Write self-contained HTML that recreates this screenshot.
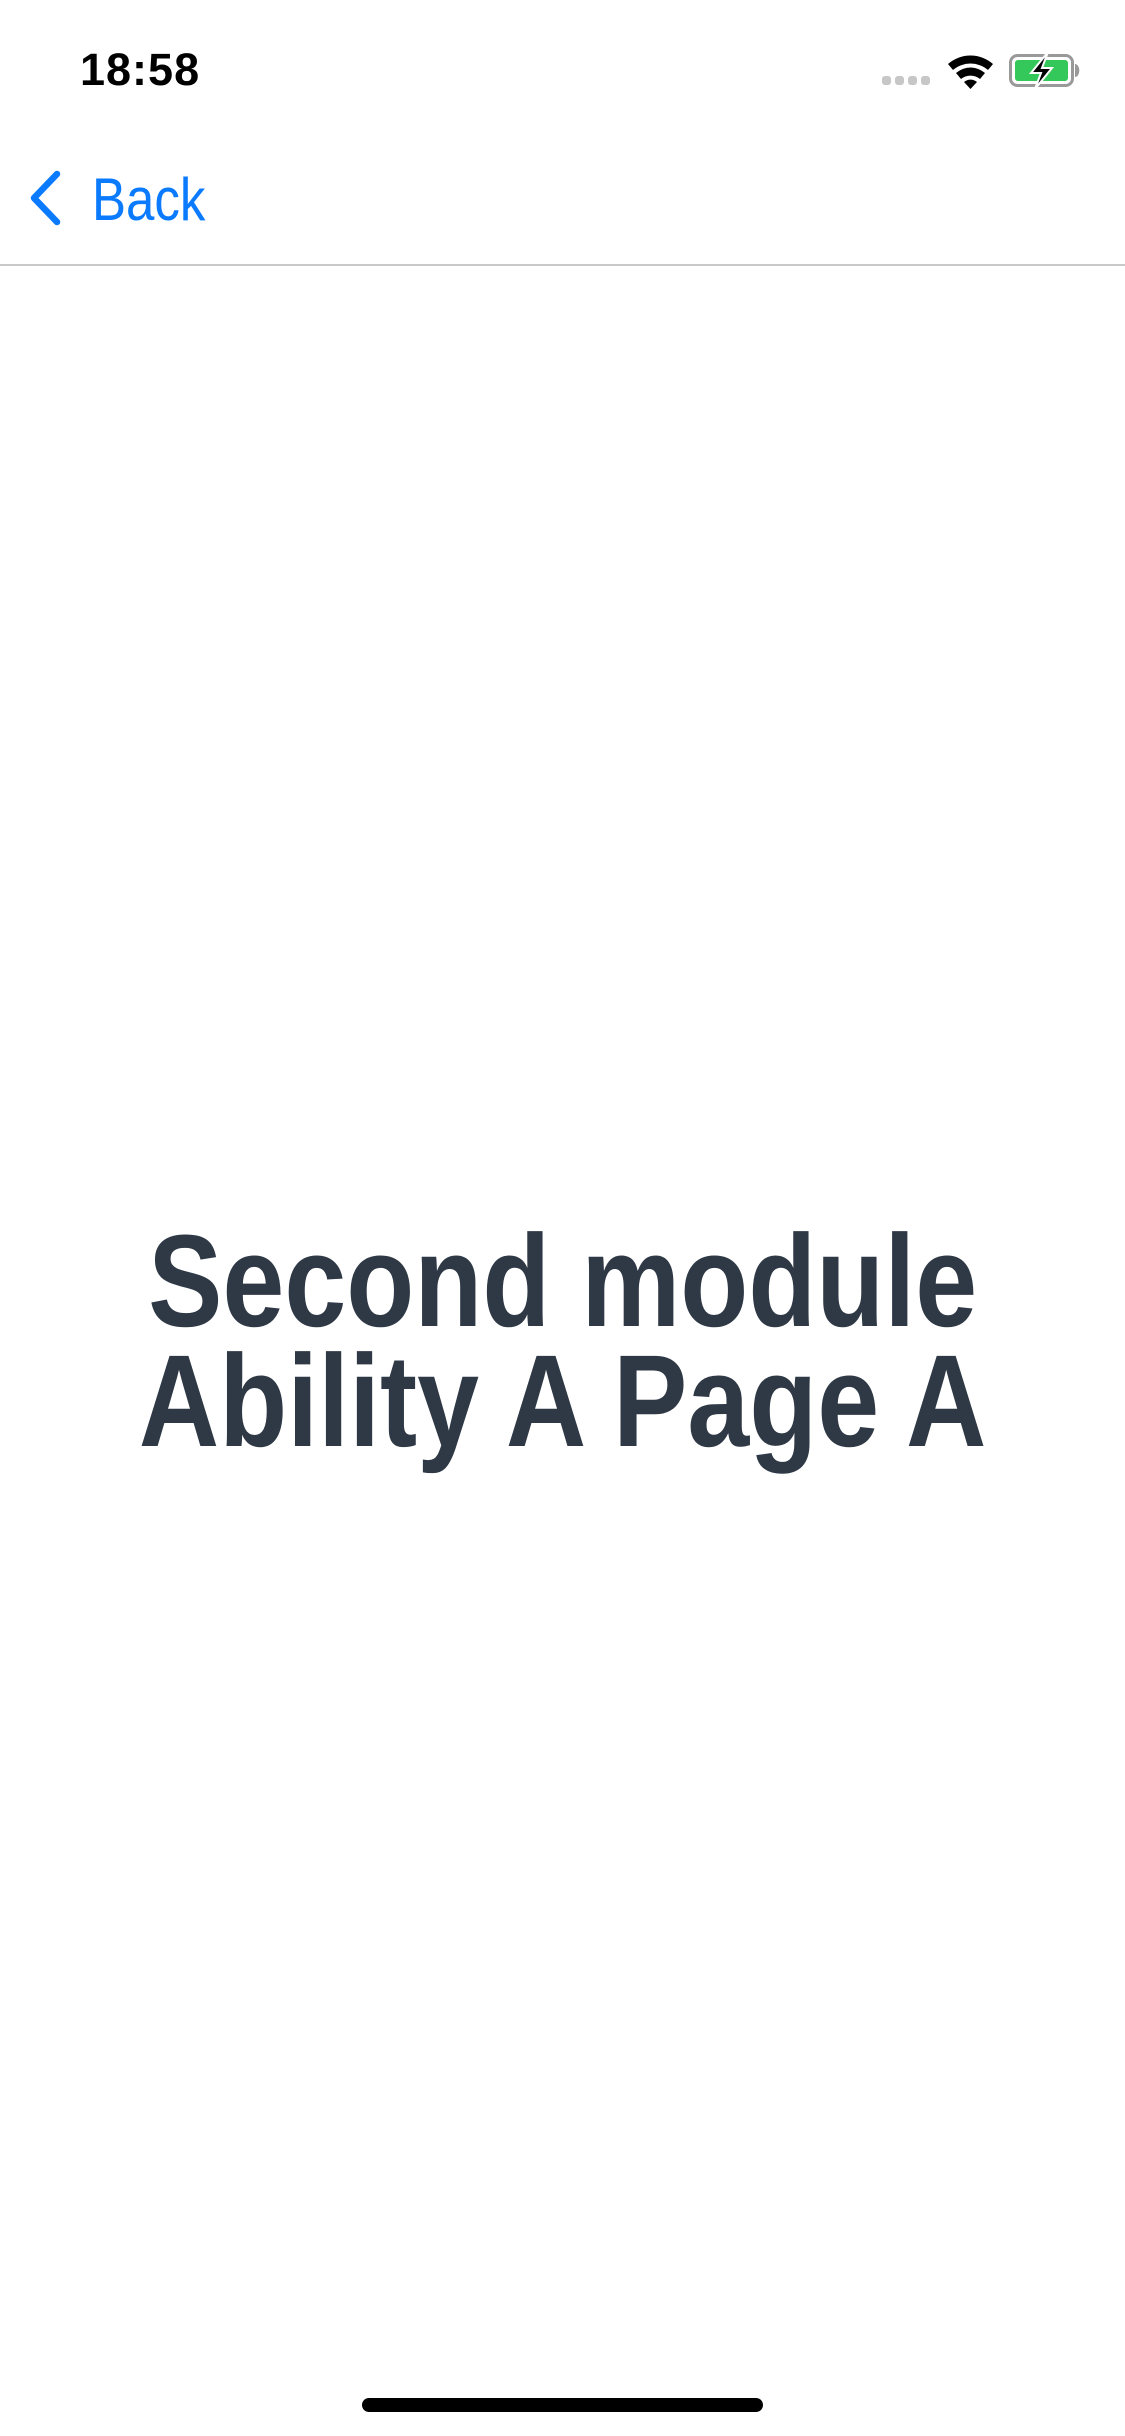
<!DOCTYPE html>
<html><head><meta charset="utf-8"><style>
html,body{margin:0;padding:0;background:#fff;}
body{width:1125px;height:2436px;position:relative;overflow:hidden;font-family:"Liberation Sans",Arial,sans-serif;}
.time{position:absolute;left:80px;top:44px;font-size:45px;font-weight:bold;color:#000;letter-spacing:1px;}
.back{position:absolute;left:92px;top:165px;font-size:60px;color:#0a7aff;transform:scaleX(0.85);transform-origin:left;}
.sep{position:absolute;left:0;top:264px;width:1125px;height:2px;background:#c8c8c8;}
.title{position:absolute;left:0;width:1125px;top:1221px;text-align:center;font-size:131px;line-height:120px;font-weight:bold;color:#2f3946;}
.title span{display:inline-block;transform:scaleX(0.85);transform-origin:center;white-space:nowrap;}
.home{position:absolute;left:362px;top:2398px;width:401px;height:14px;border-radius:7px;background:#000;}
</style></head><body>
<div class="time">18:58</div>
<svg style="position:absolute;left:880px;top:50px" width="210" height="40" viewBox="880 50 210 40">
 <g fill="#c7c7c7"><rect x="882" y="76" width="9" height="9" rx="3"/><rect x="895" y="76" width="9" height="9" rx="3"/><rect x="908" y="76" width="9" height="9" rx="3"/><rect x="921" y="76" width="9" height="9" rx="3"/></g>
 <g fill="#000">
  <path d="M948 64 A34 34 0 0 1 993 64 L988 70 A27 27 0 0 0 953 70 Z"/>
  <path d="M956 73 A22 22 0 0 1 985 73 L980 79 A15 15 0 0 0 961 79 Z"/>
  <path d="M964 82 A10 10 0 0 1 977 82 L970.5 89 Z"/>
 </g>
 <rect x="1010.5" y="55.5" width="62" height="30" rx="7" fill="none" stroke="#999" stroke-width="3"/>
 <rect x="1015" y="60" width="53" height="21" rx="3" fill="#34c759"/>
 <path d="M1075 64 a4 6 0 0 1 0 13 z" fill="#999"/>
 <path d="M1048 52 L1031 73 L1041 73 L1035 89 L1052 68 L1042 68 Z" fill="#000" stroke="#fff" stroke-width="2"/>
</svg>
<svg style="position:absolute;left:24px;top:168px" width="44" height="62" viewBox="0 0 44 62"><path d="M33 6 L10 30 L33 54" fill="none" stroke="#0a7aff" stroke-width="6.5" stroke-linecap="round" stroke-linejoin="round"/></svg>
<div class="back">Back</div>
<div class="sep"></div>
<div class="title"><span>Second module</span><br><span>Ability A Page A</span></div>
<div class="home"></div>
</body></html>
